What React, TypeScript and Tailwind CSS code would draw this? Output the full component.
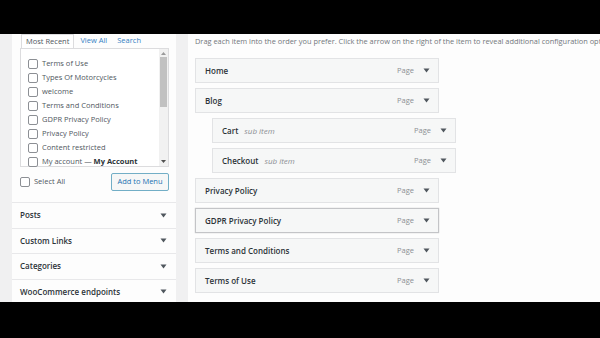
const recent = [
  "Terms of Use",
  "Types Of Motorcycles",
  "welcome",
  "Terms and Conditions",
  "GDPR Privacy Policy",
  "Privacy Policy",
  "Content restricted",
];

const sections = ["Posts", "Custom Links", "Categories", "WooCommerce endpoints"];

type Item = { title: string; sub?: boolean; active?: boolean };

const items: Item[] = [
  { title: "Home" },
  { title: "Blog" },
  { title: "Cart", sub: true },
  { title: "Checkout", sub: true },
  { title: "Privacy Policy" },
  { title: "GDPR Privacy Policy", active: true },
  { title: "Terms and Conditions" },
  { title: "Terms of Use" },
];

function Tri({ className = "" }: { className?: string }) {
  return (
    <svg width="7" height="5" viewBox="0 0 7 5" className={className}>
      <path d="M0.5 0.5h6L3.5 4.5z" fill="#50575e" />
    </svg>
  );
}

function Box() {
  return <span className="h-[10px] w-[10px] shrink-0 rounded-[2px] border border-[#8c8f94] bg-white" />;
}

function MenuItem({ item }: { item: Item }) {
  return (
    <div
      className={`flex h-[25px] w-[244px] items-center bg-[#f6f7f7] pl-[9px] pr-[8px] ${
        item.sub ? "ml-[17px]" : ""
      } ${item.active ? "border-[1.5px] border-[#c3c4c7] shadow-[0_0_1px_#bbb]" : "border border-[#e2e3e5]"}`}
    >
      <span className="text-[8px] font-semibold text-[#2c3338]">{item.title}</span>
      {item.sub && <span className="ml-[6px] text-[8px] italic text-[#8c8f94]">sub item</span>}
      <span className="ml-auto text-[7.5px] text-[#8c8f94]">Page</span>
      <Tri className="ml-[9px]" />
    </div>
  );
}

export default function App() {
  return (
    <div
      className="flex h-[338px] w-[600px] flex-col overflow-hidden bg-black text-[#3c434a]"
      style={{ fontFamily: '"Open Sans", "Noto Sans", sans-serif' }}
    >
      <div className="h-[34px] shrink-0" />
      <div className="flex h-[268px] shrink-0 overflow-hidden bg-[#f0f0f1]">
        {/* left column */}
        <div className="ml-[12px] flex w-[164px] shrink-0 flex-col overflow-hidden bg-[#fdfdfd]">
          <div className="flex h-[14px] shrink-0 items-end pl-[9px] text-[7.5px]">
            <div className="flex h-[14px] items-center border border-b-0 border-[#dcdcde] bg-white px-[4px] text-[#50575e]">
              Most Recent
            </div>
            <span className="ml-[6px] self-center text-[#3582c4]">View All</span>
            <span className="ml-[10px] self-center text-[#3582c4]">Search</span>
          </div>
          <div className="ml-[8px] flex h-[119px] w-[149px] shrink-0 border border-[#dcdcde] bg-white">
            <div className="flex flex-1 flex-col gap-[4px] pl-[7px] pt-[10px]">
              {recent.map((r) => (
                <div key={r} className="flex h-[10px] items-center gap-[4px] text-[7.5px] text-[#50575e]">
                  <Box />
                  <span>{r}</span>
                </div>
              ))}
              <div className="flex h-[10px] items-center gap-[4px] text-[7.5px] text-[#50575e]">
                <Box />
                <span>
                  My account — <b className="text-[#2c3338]">My Account</b>
                </span>
              </div>
            </div>
            <div className="flex w-[9px] flex-col items-center bg-[#f1f1f1] py-[3px]">
              <svg width="5" height="3" viewBox="0 0 5 3">
                <path d="M0 3h5L2.5 0z" fill="#9a9a9a" />
              </svg>
              <div className="mt-[2px] h-[50px] w-[7px] bg-[#c1c1c1]" />
              <svg width="5" height="3" viewBox="0 0 5 3" className="mt-auto">
                <path d="M0 0h5L2.5 3z" fill="#505050" />
              </svg>
            </div>
          </div>
          <div className="flex h-[30px] shrink-0 items-center pl-[8px] pr-[7px]">
            <div className="flex items-center gap-[4px] text-[7.5px] text-[#50575e]">
              <span className="h-[10px] w-[10px] rounded-[2px] border border-[#8c8f94] bg-white" />
              Select All
            </div>
            <div className="ml-auto flex h-[18px] w-[58px] items-center justify-center rounded-[2px] border border-[#72aec6] bg-[#f6f7f7] text-[7.5px] text-[#2271b1]">
              Add to Menu
            </div>
          </div>
          <div className="mt-[5px] flex shrink-0 flex-col">
            {sections.map((s) => (
              <div
                key={s}
                className="flex h-[25.5px] shrink-0 items-center border-t border-[#e8e8ea] pl-[8px] pr-[9px] text-[8px] font-semibold text-[#2c3338]"
              >
                <span>{s}</span>
                <Tri className="ml-auto" />
              </div>
            ))}
          </div>
        </div>

        {/* right column */}
        <div className="ml-[12px] flex flex-1 bg-[#fdfdfd]">
          <div className="flex flex-1 flex-col overflow-hidden pl-[7px]">
            <p className="mt-[1px] whitespace-nowrap text-[7.4px] leading-[12px] text-[#72777c]">
              Drag each item into the order you prefer. Click the arrow on the right of the item to reveal additional configuration options.
            </p>
            <div className="mt-[11px] flex flex-col gap-[5px]">
              {items.map((it) => (
                <MenuItem key={it.title} item={it} />
              ))}
            </div>
          </div>
          <div className="flex w-[7px] flex-col items-center bg-[#f1f1f1] py-[3px]">
            <svg width="4" height="3" viewBox="0 0 4 3">
              <path d="M0 3h4L2 0z" fill="#707070" />
            </svg>
            <div className="mt-[92px] h-[108px] w-[6px] bg-[#c1c1c1]" />
            <svg width="4" height="3" viewBox="0 0 4 3" className="mt-auto">
              <path d="M0 0h4L2 3z" fill="#707070" />
            </svg>
          </div>
        </div>
      </div>
    </div>
  );
}
